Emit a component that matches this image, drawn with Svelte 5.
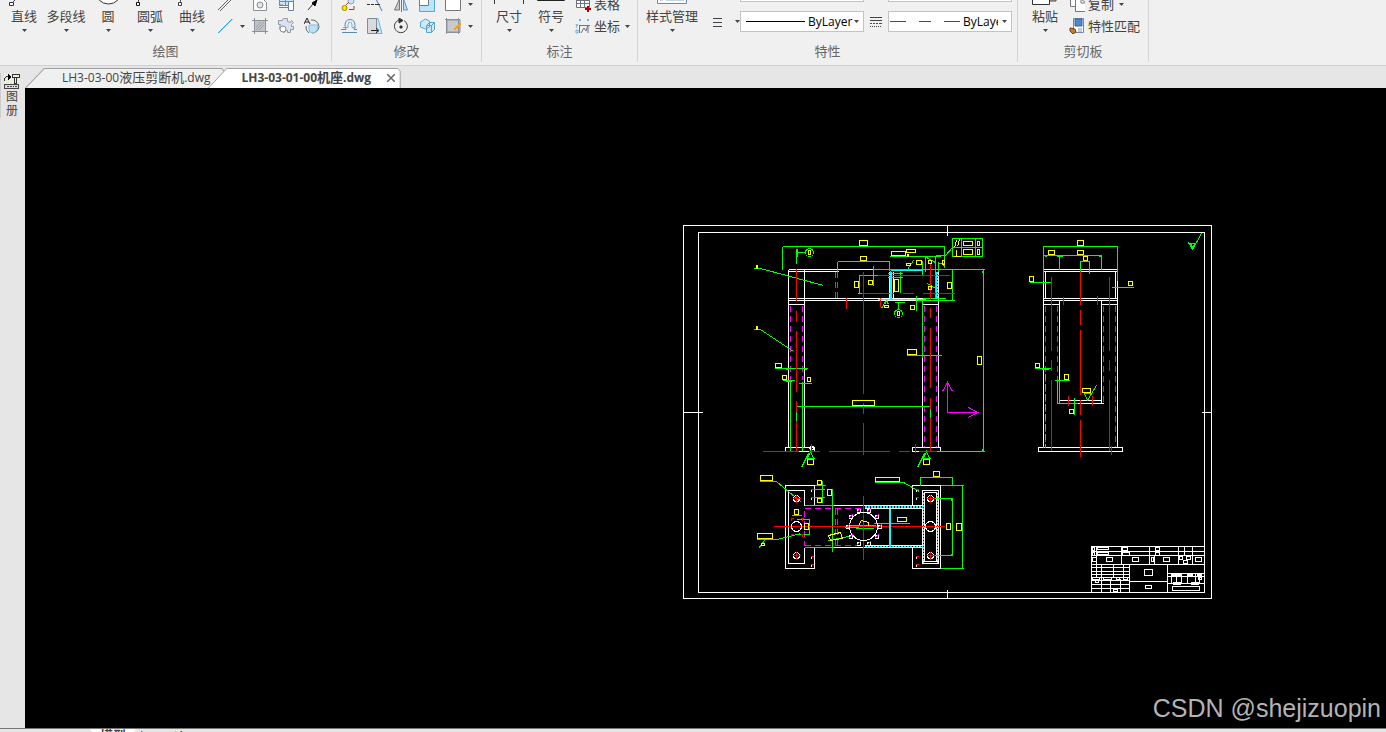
<script>
	// every shape is [path, stroke, fill]
	const large = {
		line: [['M5 27L30 2', '#444b54', 'none'], ['M1.5 27.5h4v3h-4z', '#333', '#fff']],
		polyline: [['M3 24L12 8L20 24L29 6', '#444b54', 'none'], ['M2 22h4v2h-4zM18 22h4v2h-4z', '#333', '#333']],
		circle: [['M3.5 16a13 13 0 1 0 26 0a13 13 0 1 0 -26 0', '#333', '#fff']],
		arc: [['M4.5 27V20Q6 4 28 4', '#444b54', 'none'], ['M2.5 27.5h3v3h-3z', '#111', '#fff']],
		curve: [['M4.5 27V21Q9 2 16 15T29 4', '#555', 'none'], ['M2.5 27.5h3v3h-3z', '#444', '#fff']],
		dimension: [['M1.5 4V29M30.5 4V29M2 23.5H30', '#333b48', 'none']],
		symbol: [['M2.5 8.5h27v17h-27zM15.5 9V25', '#222', '#fff']],
		style: [['M1.5 5.5h29v23h-29z', '#6b8cae', '#fff'], ['M4 9h3v16H4zM10 9h18v16H10z', '#91a9c7', '#b9cbe3']],
		paste: [['M14 6h13v20H14z', '#4d4740', '#c5b6a0'], ['M3.5 3.5h17v26h-17z', '#333', '#fff']]
	};
	const small = {
		mline: [['M1 14L14 1M3 15L16 2', '#59616b', 'none']],
		xline: [['M1 15L15 1', '#2da9df', '#2da9df'], ['M1.5 15L15.5 1', '#2da9df', 'none']],
		region: [['M1.5 2.5h9l4 4v8h-13z', '#8b8f96', '#fafafa'], ['M5 9a3 3 0 1 0 6 0a3 3 0 1 0 -6 0', '#8b8f96', '#e2e4e8']],
		table: [['M1.5 1.5h14v8h-14zM1 5.5h15M7.5 1v8', '#5f8fc0', '#cfe5f7'], ['M10.5 5.5h5v9h-5zM1 11.5h10M1 9h4', '#6882a2', '#fff']],
		arrow: [['M4 14L9 8', '#333', 'none'], ['M13 4L8 7l3 3z', '#000', '#000']],
		hatch: [['M2.5 2.5h11v11h-11z', '#8f959d', '#c0c4c8'], ['M0 2.5h16M0 13.5h16M2.5 0v16M13.5 0v16', '#8a9199', 'none'], ['M4 9l5 -5M4 12l8 -8M7 12l5 -5', '#999fa6', 'none']],
		gear: [['M5.5 0.5h4v3l3 1 1-2 2 2-2 2v2h2v3h-3v3h-3v-2h-2l-1 2-4-2-1-3 1-3h-2v-4h4z', '#929aa5', '#dce2eb'], ['M2 11a3 3 0 1 0 6 0a3 3 0 1 0 -6 0', '#858d98', '#fff']],
		area: [['M5 15a7 7 0 0 1 -3 -7M7 2a7 7 0 0 1 8 7a7 7 0 0 1 -7 6', '#5d6872', 'none'], ['M5 7h9q0 8 -6 8q-3-1-3-4z', '#83b9d6', '#b8e2f7'], ['M0 6L3 0l3 6M1 4h4', '#222', 'none']],
		copy: [['M7 5a3 3 0 1 0 6 0a3 3 0 1 0 -6 0', '#74a7d5', '#c9e5fa'], ['M1 12a2.5 2.5 0 1 0 5 0a2.5 2.5 0 1 0 -5 0', '#9a8900', '#ffe800'], ['M8 13.5h5V10M5 9l3 -3', '#a33a3a', 'none']],
		trim: [['M8 1L15 15', '#3779c5', 'none'], ['M0 8.5h3M4 8.5h3M8 8.5h5', '#333', 'none']],
		mirror: [['M6.5 3v11h-5z', '#777', '#c8ccd1'], ['M10.5 3v11h4z', '#5598cb', '#b9dcf4'], ['M8.5 0v16', '#777', 'none']],
		scale: [['M.5 .5h15v15H.5z', '#58a6d6', '#bce4fb'], ['M.5 .5h9v9h-9z', '#777', '#fff']],
		rectangle: [['M.5 .5h15v14H.5z', '#777', '#fff']],
		offset: [['M1 14.5h15M0 11.5h5l-1-4q0-6 5-6t5 6l-1 4h3', '#5a8cae', 'none'], ['M2 9.5h5V7q0-3 2-3t2 3v2.5h4', '#6fb4d8', 'none']],
		stretch: [['M9 .5h2l4 15H9z', '#73b3d6', '#c4e9fb'], ['M.5 .5h9v15h-9z', '#858b92', '#d9dadd'], ['M4 12.5h7M9 10l3 2.5l-3 2.5', '#222', 'none']],
		rotate: [['M6 2a6.5 6.5 0 1 0 5 0.5', '#444', 'none'], ['M6 0l4 2.5L6 5zM7 8h2v2H7z', '#333', '#333']],
		array: [['M1.5 4l5 -3l4 2v6l-4 2l-5 -2zM7.5 7.5l3 -3h5v7l-3 3h-5zM7.5 7.5h5v7M12.5 7.5l3 -3', '#59a4cc', '#cbeafa']],
		edit: [['M2 2h12v12H2z', '#8f959d', '#c8cacc'], ['M0 1.5h15v13H1M1.5 0v16M13.5 0v16', '#8a9199', 'none'], ['M15 5L9 11l1 1l6-6z', '#e9a12e', '#e9a12e']],
		grid: [['M1.5 1.5h13v10h-13zM1 4.5h14M1 7.5h14M5.5 1v11M9.5 1v11', '#6d737c', '#fff'], ['M10 12.5h6M12.5 10v6M10 13.5h6M13.5 10v6', '#b30000', 'none']],
		coord: [['M4.5 15V7M4 7.5h11M6 15l3-5 2 3 2-6v8', '#687383', 'none'], ['M4 1l2 2M6 1l-2 2M12 1l2 2M14 1l-2 2M1 6l1 2M3 6l-2 4M1 12v3h2v-3z', '#6ab4dd', 'none']],
		copies: [['M1.5 -2.5h8v13h-8z', '#777', '#fff'], ['M6.5 3.5h6l4 3v9h-10z', '#777', '#fff'], ['M12 3v4h4', '#777', 'none']],
		match: [['M4.5 .5h10v14h-10z', '#7a879a', '#fff'], ['M6 1h7v7H6z', '#3465a4', '#5487c7'], ['M1 10l5 1 1 3-3 2-3-3z', '#744014', '#c57b32'], ['M9 11h4M9 13h4', '#8697ab', 'none']],
		weight: [['M4 4.5h9M4 8.5h9M4 12.5h9', '#3d4148', 'none']],
		linetype: [['M2 3.5h12M2 6.5h12', '#444', 'none'], ['M2 9.5h2M5 9.5h2M8 9.5h2M11 9.5h3M2 12.5h1M4 12.5h1M6 12.5h1M8 12.5h1M10 12.5h1M12 12.5h1', '#444', 'none']]
	};

	const drawTools = [['line', '直线'], ['polyline', '多段线'], ['circle', '圆'], ['arc', '圆弧'], ['curve', '曲线']];
	const drawSmall = [
		['mline', '多线'], null, ['region', '面域'], ['table', '表'], ['arrow', '箭头'],
		['xline', '构造线'], 'caret', ['hatch', '填充'], ['gear', '齿轮'], ['area', '面积']
	];
	const modifyTools = [
		['copy', '复制对象'], ['trim', '修剪'], ['mirror', '镜像'], ['scale', '缩放'], ['rectangle', '矩形'], 'caret',
		['offset', '偏移'], ['stretch', '拉伸'], ['rotate', '旋转'], ['array', '阵列'], ['edit', '编辑填充'], 'caret'
	];

	// strokes of the drawing, grouped by layer colour
	const layers = [
		{
			color: '#fff',
			d: `M683 225H1211V598H683zM698 232H1204V592H698zM947 225V235M947 589V598M683 412H702M1201 412H1211
				M788 269H872M788 271H838M788 269V447M804 269V447M788 298H937M788 300H938M788 304H804M922 304H938M922 357V447M938 269V447
				M785 447H814V451H785zM912 447H940V451H912zM810 446h3v3h-3zM808 448h2v2M893 271V298M889 271V298M892 270H922
				M814 505V485H785V568H814V547M804 505V490H788V563H804V547M833 505H922M833 547H922
				M912 505V485H940V568H912V547M922 490H938V563H922zM924 492H936V561H924zM922 561H938M864 508H922M864 545H922
				M1043 269H1117M1043 271H1117M1043 280V447M1117 280V447M1045 271V298M1115 271V298M1043 298H1117M1043 300H1117
				M1043 304H1059M1101 304H1117M1059 300V379M1101 300V403M1059 400H1101M1077 403H1103M1038 447H1122V451H1038z
				M1091 592V546H1204M1091 551H1204M1091 555H1204M1091 564H1204M1129 564V592M1167 564V592M1129 581H1167
				M1096 546V564M1121 546V564M1149 546V564M1154 555V564M1178 546V564M1184 546V555M1192 546V564
				M1091 567H1129M1091 571H1129M1091 574H1129M1091 577H1129M1091 580H1129M1091 584H1129M1091 588H1129
				M1096 564V577M1101 564V592M1110 578V592M1113 564V577M1120 578V592M1123 564V577M1167 573H1204M1167 576H1204M1167 583H1204
				M1171 576V583M1176 576V583M1181 573V583M1187 573V583M1195 573V583M1199 573V583`
		},
		{
			color: '#0f0',
			d: `M782 246H944M782 246V269M944 246V267M796 248V263M797 248V256M797 252H805M837 261H889M837 261V271M889 261V270
				M753 268H760L823 285M753 329H760L793 351M872 269H984M983 269V451M982 270V272M873 265V285M859 275V293M858 275H877M857 293H862
				M887 273H902M887 277H902M900 271V292M916 295V310M917 300H954M922 298H945M952 269V300M922 260V275M925 255V271M935 255V298
				M935 255H945L952 247M889 256H940M952 238H982V256H952zM961 238V256M975 238V256M952 247H982M894 302H904M898 302V309
				M881 308L885 301M884 304L886 300L888 304M907 269L913 260M926 257L935 262M927 283L935 288M938 261V271M938 263H943M942 263L945 268
				M922 300V357M774 368H807M785 369H788M804 369H806M782 380H794M785 381H791M790 380V450M802 381V450M798 383H811M796 406H930M906 355H941M796 411V420M930 408V417M936 451H984M982 448V451
				M801 467L808 453M807 458L810 451L813 458M806 458H814M917 467L924 453M923 458L926 451L929 458M922 458H930
				M759 481H776L801 502M814 485H825M822 480V502M812 489H824M812 497H824M832 488V551M804 505H833M804 547H833M756 539H777L800 533M758 548L764 540M762 541V543
				M796 519H809V534H796M791 515H801M874 482H903L919 491M920 485V477H952V485M940 485H963M962 485V568M940 568H963M930 498H952V555H930M951 498V500M951 553V555
				M873 526L845 527M846 525H875M873 523H909M828 540L853 535M855 528H873
				M1043 246H1117M1043 245V280M1117 245V280M1043 255H1101M1044 256H1046M1056 256H1062M1098 256H1101M1059 254V269M1101 254V269M1080 270V261H1089V273M1029 282H1050M1111 287H1133
				M1034 368H1050M1041 369H1048M1054 380H1069M1057 380V403M1059 380V403M1057 403H1077M1074 397V414M1083 393H1091M1084 393L1087 400L1096 385
				M1188 242L1192 249L1201 233M1190 243H1195L1192 247z`
		},
		{
			color: '#f00',
			d: `M796 268V300M796 310V321M796 330V391M796 400V411M796 420V450M863 271V393M863 402V413M863 422V454
				M930 262V299M930 307V317M930 327V387M930 397V408M930 417V450M846 297V308M880 297V306M877 275H949M861 293H893M902 293H913M922 293H954
				M811 443V452M915 443V452M762 451H798M808 451H819M828 451H889M898 451H909M918 451H936M773 526H944M863 495V559
				M1051 276V350M1051 359V370M1051 379V450M1109 276V350M1109 359V370M1109 379V450M1080 270V304M1080 309V324M1080 329V394M1080 399V414M1080 419V456
				M1063 296V304M1097 295V304M1068 395V405M1092 395V405M1111 445V454
				M791 517V520M802 517V520M791 533V536M802 533V536M790 518H793M800 518H803M790 534H793M800 534H803`
		},
		{ color: '#f0f', d: 'M947 412V382M942 391L947 382L952 391M947 412H977M968 407L977 412L968 417' },
		{
			color: '#ff0',
			d: `M756 264V268M757 264V268M756 325V329M757 325V329M907 253V256M908 253V256M953 256H960M954 247L956 240M957 246L959 239M956 249V256
				M858 525L861 520L868 522V525M828 535L840 532L842 538L830 540z`
		}
	];
	const hidden = 'M835 271V298M837 271V298M790 305V379M802 305V379M924 305V447M936 305V447M804 508H863M804 545H863M835 508V545M837 508V545M804 510V545M1045 305V447M1057 305V380M1103 305V403M1115 305V447';

	// dimension texts are too small to read at this zoom, so each one is a box: x, y, width, height
	const texts = [
		[859, 240, 8, 5], [860, 256, 6, 4], [891, 251, 14, 4], [906, 249, 9, 3], [906, 263, 4, 2], [916, 260, 5, 4],
		[928, 260, 3, 3], [928, 286, 3, 3], [942, 260, 2, 4], [854, 281, 4, 6], [868, 280, 4, 4], [894, 279, 4, 12],
		[947, 282, 4, 6], [884, 305, 4, 2], [910, 305, 4, 4], [897, 311, 2, 4], [808, 250, 2, 4], [907, 349, 9, 5],
		[963, 241, 9, 4], [963, 249, 9, 5], [977, 241, 2, 4], [977, 249, 2, 5], [775, 363, 6, 4], [782, 375, 4, 4],
		[807, 377, 3, 4], [852, 400, 22, 5], [807, 459, 6, 5], [923, 459, 6, 5], [977, 356, 4, 8], [817, 480, 4, 4],
		[817, 498, 4, 4], [827, 489, 4, 6], [794, 509, 4, 5], [804, 523, 4, 6], [760, 475, 12, 5], [757, 533, 15, 5],
		[761, 543, 3, 2], [875, 477, 24, 4], [933, 471, 6, 5], [946, 523, 4, 6], [956, 523, 5, 7], [897, 517, 9, 4],
		[1077, 240, 6, 5], [1048, 250, 6, 4], [1077, 250, 6, 4], [1083, 256, 4, 4], [1029, 276, 4, 5], [1128, 281, 4, 4],
		[1035, 363, 4, 4], [1064, 374, 4, 5], [1082, 388, 8, 4], [1069, 409, 4, 4]
	];
	const titleTexts = [
		[1097, 547, 11, 2], [1097, 552, 11, 2], [1122, 547, 5, 3], [1122, 552, 7, 3], [1155, 547, 4, 3], [1155, 552, 4, 3],
		[1092, 547, 2, 3], [1092, 552, 2, 3], [1092, 557, 4, 4], [1106, 557, 6, 4], [1132, 557, 6, 4], [1151, 557, 2, 4],
		[1163, 557, 6, 4], [1179, 556, 3, 3], [1186, 556, 4, 3], [1183, 560, 4, 3], [1195, 557, 6, 4], [1144, 569, 8, 6],
		[1145, 585, 6, 3], [1172, 586, 27, 4], [1092, 577, 7, 2], [1095, 580, 3, 2], [1103, 577, 8, 2], [1116, 577, 3, 2],
		[1123, 577, 4, 2], [1171, 574, 10, 1], [1188, 574, 4, 1], [1197, 574, 4, 1], [1198, 577, 3, 2], [1173, 582, 7, 2],
		[1191, 582, 7, 2], [1113, 589, 4, 2]
	];
	const anchors = [[796, 498], [796, 555], [930, 498], [930, 555]];
	const holes = [811, 916].flatMap((x) => [489, 497, 556, 564].map((y) => [x, y]));
	const bolts = [
		[858, 510], [868, 510], [876, 516], [879, 526], [876, 536],
		[868, 543], [858, 543], [850, 536], [847, 526], [850, 516]
	];

	const files = [
		{ code: 'LH3-03-00', name: '液压剪断机' },
		{ code: 'LH3-03-01-00', name: '机座' }
	];
	let current = $state(1);
</script>

{#snippet icon(shapes, size)}
	<svg width={size} height={size} viewBox="0 0 {size} {size}" aria-hidden="true">
		{#each shapes as [d, stroke, fill]}
			<path {d} {stroke} {fill} />
		{/each}
	</svg>
{/snippet}

{#snippet caret()}
	<svg class="caret" width="5" height="3" viewBox="0 0 5 3" aria-hidden="true"><path d="M0 0h5L2.5 3z" fill="#444" /></svg>
{/snippet}

{#snippet bigButton(name, label)}
	<button class="big">
		{@render icon(large[name], 32)}
		<span>{label}</span>
		{@render caret()}
	</button>
{/snippet}

{#snippet toolGrid(tools)}
	{#each tools as tool}
		{#if tool === 'caret'}
			<button class="tool" aria-label="更多">{@render caret()}</button>
		{:else if tool}
			<button class="tool" aria-label={tool[1]}>{@render icon(small[tool[0]], 16)}</button>
		{:else}
			<i></i>
		{/if}
	{/each}
{/snippet}

{#snippet rowButton(name, label, menu)}
	<button class="row-button">
		{@render icon(small[name], 16)}
		<span>{label}</span>
		{#if menu}{@render caret()}{/if}
	</button>
{/snippet}

{#snippet lineSelect(label, color, dash)}
	<div class="combo">
		<svg class="sample" height="19" aria-hidden="true"><path d="M1 9.5H71" stroke={color} stroke-dasharray={dash} /></svg>
		<select aria-label={label}><option>ByLayer</option></select>
		<span class="combo-caret">{@render caret()}</span>
	</div>
{/snippet}

<div class="app">
	<header class="ribbon">
		<section class="group draw">
			<div class="body">
				{#each drawTools as [name, label]}
					{@render bigButton(name, label)}
				{/each}
				<div class="draw-grid">{@render toolGrid(drawSmall)}</div>
			</div>
			<h2>绘图</h2>
		</section>
		<section class="group modify">
			<div class="modify-grid">{@render toolGrid(modifyTools)}</div>
			<h2>修改</h2>
		</section>
		<section class="group annotate">
			<div class="body">
				{@render bigButton('dimension', '尺寸')}
				{@render bigButton('symbol', '符号')}
				<div class="rows">
					{@render rowButton('grid', '表格', false)}
					{@render rowButton('coord', '坐标', true)}
				</div>
			</div>
			<h2>标注</h2>
		</section>
		<section class="group properties">
			<div class="body">
				{@render bigButton('style', '样式管理')}
				<div class="property-grid">
					<i></i><i></i>
					{@render lineSelect('颜色', '#fff', 'none')}
					<i></i>
					{@render lineSelect('打印样式', '#fff', 'none')}
					<button class="tool" aria-label="线宽">{@render icon(small.weight, 16)}</button>
					<button class="tool" aria-label="线宽列表">{@render caret()}</button>
					{@render lineSelect('线宽', '#000', 'none')}
					<button class="tool" aria-label="线型">{@render icon(small.linetype, 16)}</button>
					<div class="long">{@render lineSelect('线型', '#f00', '16 13 12 13')}</div>
				</div>
			</div>
			<h2>特性</h2>
		</section>
		<section class="group clipboard">
			<div class="body">
				{@render bigButton('paste', '粘贴')}
				<div class="rows">
					{@render rowButton('copies', '复制', true)}
					{@render rowButton('match', '特性匹配', false)}
				</div>
			</div>
			<h2>剪切板</h2>
		</section>
	</header>

	<div class="workspace">
		<aside>
			<button>
				<svg width="16" height="17" viewBox="0 0 16 17" shape-rendering="crispEdges" aria-hidden="true">
					<path d="M0 0h16v11H0z" fill="#eceedc" />
					<path d="M.5 8V5.5L2.5 3.5H6M8.500 1.5h7v3h-7zM10.5 5v5h2V5" stroke="#333" fill="none" />
					<path d="M4 1v6l4 -3z" fill="#000" />
					<path d="M.5 11.5h14v4H.5zM3 13.5h2M6 13.5h2M9 13.5h1M11 13.5h2" stroke="#444" fill="#ddd" />
				</svg>
				<span>图</span>
				<span>册</span>
			</button>
		</aside>

		<main>
			<nav>
				{#each files as file, i}
					<div class="tab" class:active={current === i}>
						<svg class="shape" viewBox="0 0 196 20" preserveAspectRatio="none" aria-hidden="true">
							<path d="M0.5 20L19 .5H193L195.5 3V20" />
						</svg>
						<button onclick={() => (current = i)}>{file.code}<span>{file.name}</span>.dwg</button>
						{#if current === i}
							<button class="close" aria-label="关闭">
								<svg width="8" height="8" viewBox="0 0 8 8"><path d="M0 0l8 8M8 0L0 8" stroke="#666" stroke-width="1.5" /></svg>
							</button>
						{/if}
					</div>
				{/each}
			</nav>

			<div class="canvas">
				<svg class="sheet" viewBox="24.5 87.5 1361 640" preserveAspectRatio="xMinYMin slice" fill="none" shape-rendering="crispEdges">
					<path d={hidden} stroke="#f0f" stroke-dasharray="6 4" />
					{#each layers as layer}
						<path d={layer.d} stroke={layer.color} />
					{/each}
					<g stroke="#0ff">
						<path d="M890 270V298M891 271V298M890 270H922M877 299H925M936 271V298M889 508V545M890 508V545M1043 445V447" />
						<path d="M937 271V298M864 506H922M864 507H922M864 546H922M923 492V562M937 492V562" stroke-dasharray="2 1" />
					</g>
					<path d="M1045 373V447" stroke="#0f0" stroke-dasharray="6 4" />
					<g stroke="#0f0">
						<circle cx="809" cy="252" r="4" />
						<circle cx="898" cy="313" r="4" />
					</g>
					<g stroke="#fff">
						<circle cx="863" cy="526" r="14" />
						<circle cx="796" cy="526" r="5" />
						<circle cx="930" cy="526" r="5" />
						{#each titleTexts as [x, y, width, height]}
							<rect {x} {y} {width} {height} />
						{/each}
					</g>
					{#each bolts as [x, y]}
						<rect x={x - 1} y={y - 1} width="3" height="3" stroke="#fff" />
						<path d="M{x - 2} {y + 2}L{x + 2} {y - 2}" stroke="#f0f" />
					{/each}
					{#each anchors as [x, y]}
						<circle cx={x} cy={y} r="3" stroke="#fff" />
						<path d="M{x - 4} {y}H{x + 4}M{x} {y - 4}V{y + 4}" stroke="#f00" />
					{/each}
					{#each holes as [x, y]}
						<path d="M{x - 1} {y}H{x + 2}" stroke="#f00" />
						<path d="M{x} {y}v2" stroke="#fff" />
					{/each}
					{#each texts as [x, y, width, height]}
						<rect {x} {y} {width} {height} stroke="#ff0" />
					{/each}
				</svg>
				<p class="watermark">CSDN @shejizuopin</p>
			</div>
		</main>
	</div>

	<footer>
		<button class="layout active">模型</button>
		<button class="layout">Layout1</button>
	</footer>
</div>

<style>
	:global(body) {
		background: #e5e5e5;
	}

	.app {
		display: flex;
		flex-direction: column;
		height: 100vh;
		overflow: hidden;
		color: #444;
		font-family: 'Open Sans', 'Noto Sans CJK SC', sans-serif;
		font-size: 13px;
	}

	svg {
		display: block;
		flex: none;
	}

	button {
		margin: 0;
		padding: 0;
		border: none;
		background: none;
		color: inherit;
		font: inherit;
		cursor: pointer;
	}

	.ribbon {
		display: flex;
		align-items: flex-end;
		flex: none;
		box-sizing: border-box;
		height: 66px;
		padding-bottom: 3px;
		border-bottom: 1px solid #d2d2d2;
		background: #f0f0f0;
		overflow: hidden;
	}

	.group {
		display: flex;
		flex-direction: column;
		flex: none;
		border-right: 1px solid #d4d4d4;
	}

	.modify {
		align-self: flex-end;
		min-height: 64px;
		justify-content: flex-end;
	}

	.body {
		display: flex;
		align-items: flex-end;
	}

	h2 {
		margin: 5px 0 0;
		padding-bottom: 2px;
		color: #666;
		font-size: 13px;
		font-weight: normal;
		line-height: 18px;
		text-align: center;
	}

	.draw .body {
		padding: 0 6px 0 3px;
	}

	.annotate .body {
		padding: 0 7px 0 6px;
	}

	.properties .body {
		padding: 0 5px 0 6px;
	}

	.clipboard .body {
		padding: 0 8px 0 6px;
	}

	.big {
		display: flex;
		flex-direction: column;
		align-items: center;
		min-width: 42px;
		height: 62px;
		line-height: 18px;
		white-space: nowrap;
	}

	.big .caret {
		margin-top: 4px;
	}

	.properties .big {
		width: 56px;
	}

	.draw-grid,
	.modify-grid {
		display: grid;
		grid-auto-rows: 22px;
	}

	.draw-grid {
		grid-template-columns: 24px 10px repeat(3, 26px);
	}

	.modify-grid {
		grid-template-columns: repeat(5, 26px) 8px;
		padding: 0 7px 0 4px;
	}

	.tool {
		display: flex;
		align-items: center;
		justify-content: center;
	}

	.rows {
		display: flex;
		flex-direction: column;
		padding-left: 3px;
	}

	.row-button {
		display: flex;
		align-items: center;
		gap: 3px;
		height: 22px;
		line-height: 18px;
	}

	.row-button .caret {
		margin-left: 2px;
	}

	.property-grid {
		display: grid;
		grid-template-columns: 34px 6px 124px 24px 124px;
		grid-auto-rows: 21px;
		row-gap: 9px;
		padding-bottom: 5px;
	}

	.combo {
		display: flex;
		box-sizing: border-box;
		height: 21px;
		padding-left: 4px;
		border: 1px solid #c3c3c3;
		background: #fff;
	}

	.sample {
		width: 60px;
	}

	.combo select {
		flex: 1;
		min-width: 0;
		margin: 0;
		padding: 0 0 0 3px;
		border: none;
		outline: none;
		appearance: none;
		background: transparent;
		color: #000;
		font: 12px 'Open Sans', sans-serif;
		text-overflow: clip;
	}

	.combo-caret {
		display: flex;
		align-items: center;
		padding-right: 4px;
		pointer-events: none;
	}

	.long .combo {
		padding-left: 0;
	}

	.long .sample {
		width: 71px;
	}

	.long .combo-caret {
		padding-left: 4px;
	}

	.workspace {
		display: flex;
		flex: 1;
		min-height: 0;
	}

	aside {
		flex: none;
		width: 25px;
		padding-top: 7px;
		box-sizing: border-box;
		background: #e6e6e6;
	}

	aside button {
		display: flex;
		flex-direction: column;
		align-items: center;
		width: 23px;
		border-left: 1px solid #ccc;
		font-size: 12px;
		line-height: 14px;
	}

	main {
		display: flex;
		flex: 1;
		flex-direction: column;
		min-width: 0;
	}

	nav {
		display: flex;
		align-items: flex-end;
		flex: none;
		height: 22px;
		background: #e6e6e6;
	}

	.tab {
		display: flex;
		align-items: flex-start;
		position: relative;
		height: 20px;
		padding: 0 14px 0 37px;
		font-size: 12px;
		line-height: 18px;
		white-space: nowrap;
	}

	.tab + .tab {
		margin-left: -16px;
		padding: 0 6px 0 33px;
	}

	.tab.active {
		z-index: 1;
		font-weight: bold;
	}

	.tab button {
		position: relative;
	}

	.tab span {
		font-size: 13px;
	}

	.shape {
		position: absolute;
		inset: 0;
		width: 100%;
		height: 100%;
		fill: #f0f0f0;
		stroke: #a0a0a0;
	}

	.active .shape {
		fill: #fff;
	}

	.tab .close {
		align-self: center;
		margin-left: 16px;
	}

	.canvas {
		flex: 1;
		position: relative;
		min-height: 0;
		background: #000;
		overflow: hidden;
	}

	.sheet {
		width: 100%;
		height: 100%;
	}

	.watermark {
		position: absolute;
		right: 5px;
		bottom: 4px;
		margin: 0;
		color: #b4b4b4;
		font-family: 'Liberation Sans', sans-serif;
		font-size: 25px;
		line-height: 32px;
	}

	footer {
		display: flex;
		align-items: flex-start;
		flex: none;
		box-sizing: border-box;
		height: 4px;
		padding-left: 90px;
		border-top: 1px solid #777;
		background: #e6e6e6;
		overflow: hidden;
	}

	.layout {
		padding: 0 10px 0 4px;
		font-size: 12px;
		line-height: 14px;
	}

	.layout.active {
		padding: 0 10px;
		background: #fff;
		font-size: 13px;
		font-weight: bold;
		line-height: 12px;
		clip-path: polygon(0 0, 100% 0, calc(100% - 9px) 100%, 9px 100%);
	}
</style>
